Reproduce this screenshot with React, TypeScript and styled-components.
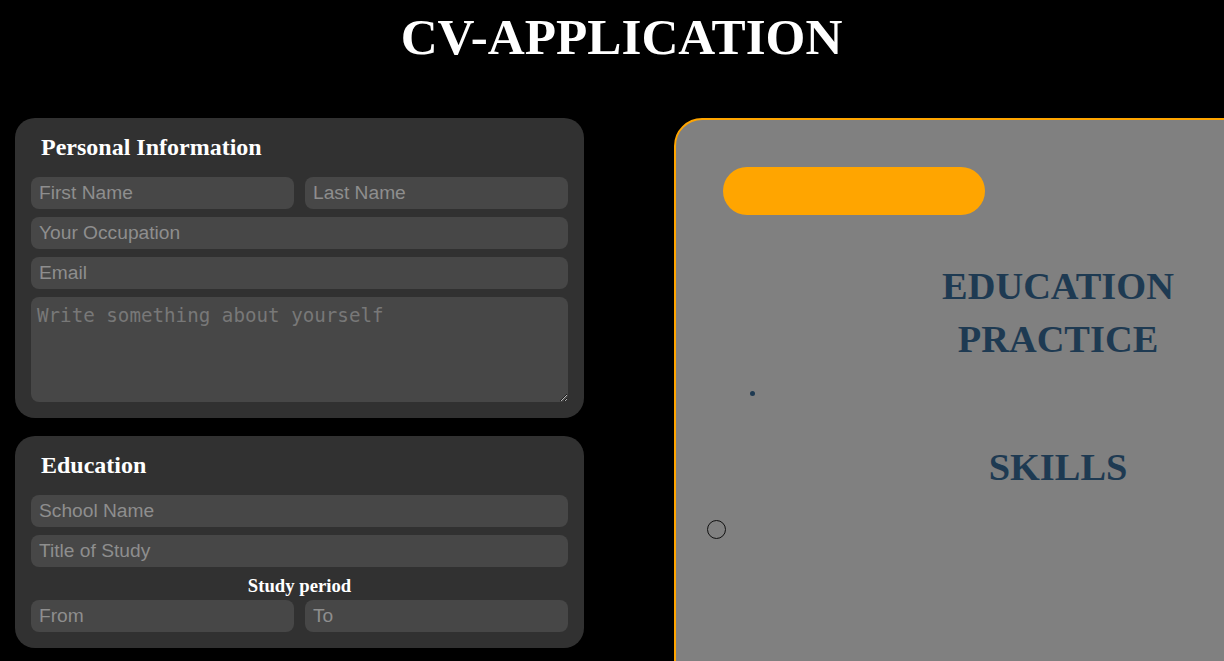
import React from "react";
import styled, { createGlobalStyle } from "styled-components";

const GlobalStyle = createGlobalStyle`
  html, body {
    margin: 0;
    padding: 0;
    background: #000;
    overflow: hidden;
  }
  body {
    font-family: "Liberation Serif", "Times New Roman", serif;
    color: #fff;
  }
  * { box-sizing: border-box; }
`;

const Page = styled.div`
  width: 1224px;
  min-height: 661px;
`;

const Header = styled.h1`
  margin: 8px 0 53px;
  padding-left: 19px;
  font-family: "Liberation Serif", "Times New Roman", serif;
  font-size: 51.2px;
  line-height: 57px;
  font-weight: 700;
  text-align: center;
  color: #fff;
`;

const Main = styled.main`
  display: grid;
  grid-template-columns: 569px 768px;
  column-gap: 90px;
  align-items: start;
  padding-left: 15px;
  width: max-content;
`;

const FormColumn = styled.div`
  display: flex;
  flex-direction: column;
  gap: 18px;
`;

const Card = styled.section`
  background: #313131;
  border-radius: 20px;
  padding: 15px 16px 16px;
  display: flex;
  flex-direction: column;
`;

const CardTitle = styled.h2`
  margin: 0 0 16px 10px;
  font-family: "Liberation Serif", "Times New Roman", serif;
  font-size: 24px;
  line-height: 28px;
  font-weight: 700;
  color: #fff;
`;

const Fields = styled.div`
  display: flex;
  flex-direction: column;
  gap: 8px;
`;

const Row = styled.div`
  display: grid;
  grid-template-columns: 1fr 1fr;
  column-gap: 11px;
`;

const Input = styled.input`
  display: block;
  width: 100%;
  height: 32px;
  border: none;
  outline: none;
  border-radius: 8px;
  background: #474747;
  color: #fff;
  padding: 0 8px;
  font-family: "Liberation Sans", Arial, sans-serif;
  font-size: 19.2px;
  &::placeholder {
    color: #8e8e8e;
  }
`;

const TextArea = styled.textarea`
  display: block;
  width: 100%;
  height: 105px;
  border: none;
  outline: none;
  border-radius: 8px;
  background: #474747;
  color: #fff;
  padding: 7px 6px;
  font-family: "DejaVu Sans Mono", "Liberation Mono", monospace;
  font-size: 19.2px;
  &::placeholder {
    color: #787878;
  }
`;

const PeriodGroup = styled.div`
  display: flex;
  flex-direction: column;
  gap: 4px;
  margin-top: 1px;
`;

const PeriodLabel = styled.h3`
  margin: 0;
  font-family: "Liberation Serif", "Times New Roman", serif;
  font-size: 18.72px;
  line-height: 20px;
  font-weight: 700;
  text-align: center;
  color: #fff;
`;

const Preview = styled.section`
  min-height: 600px;
  background: #808080;
  border: 2px solid #ffa500;
  border-radius: 28px;
  padding: 47px 47px 0;
  display: flex;
  flex-direction: column;
`;

const NameBar = styled.div`
  width: 262px;
  height: 48px;
  border-radius: 24px;
  background: #ffa500;
  flex-shrink: 0;
`;

const SectionTitle = styled.h2<{ $top?: number }>`
  margin: ${(p) => p.$top ?? 0}px 0 0;
  font-family: "Liberation Serif", "Times New Roman", serif;
  font-size: 38.4px;
  line-height: 53px;
  font-weight: 700;
  text-align: center;
  color: #1e3a52;
`;

const Bullet = styled.span`
  display: block;
  width: 5px;
  height: 5px;
  border-radius: 50%;
  background: #1e3a52;
  margin: 25px 0 0 27px;
`;

const Ring = styled.span`
  display: block;
  width: 19px;
  height: 19px;
  border-radius: 50%;
  border: 1px solid #111;
  margin: 26px 0 0 -16px;
`;

export default function App() {
  return (
    <Page>
      <GlobalStyle />
      <Header>CV-APPLICATION</Header>
      <Main>
        <FormColumn>
          <Card>
            <CardTitle>Personal Information</CardTitle>
            <Fields>
              <Row>
                <Input placeholder="First Name" />
                <Input placeholder="Last Name" />
              </Row>
              <Input placeholder="Your Occupation" />
              <Input placeholder="Email" />
              <TextArea placeholder="Write something about yourself" />
            </Fields>
          </Card>
          <Card>
            <CardTitle>Education</CardTitle>
            <Fields>
              <Input placeholder="School Name" />
              <Input placeholder="Title of Study" />
              <PeriodGroup>
                <PeriodLabel>Study period</PeriodLabel>
                <Row>
                  <Input placeholder="From" />
                  <Input placeholder="To" />
                </Row>
              </PeriodGroup>
            </Fields>
          </Card>
        </FormColumn>
        <Preview>
          <NameBar />
          <SectionTitle $top={45}>EDUCATION</SectionTitle>
          <SectionTitle>PRACTICE</SectionTitle>
          <Bullet />
          <SectionTitle $top={45}>SKILLS</SectionTitle>
          <Ring />
        </Preview>
      </Main>
    </Page>
  );
}
